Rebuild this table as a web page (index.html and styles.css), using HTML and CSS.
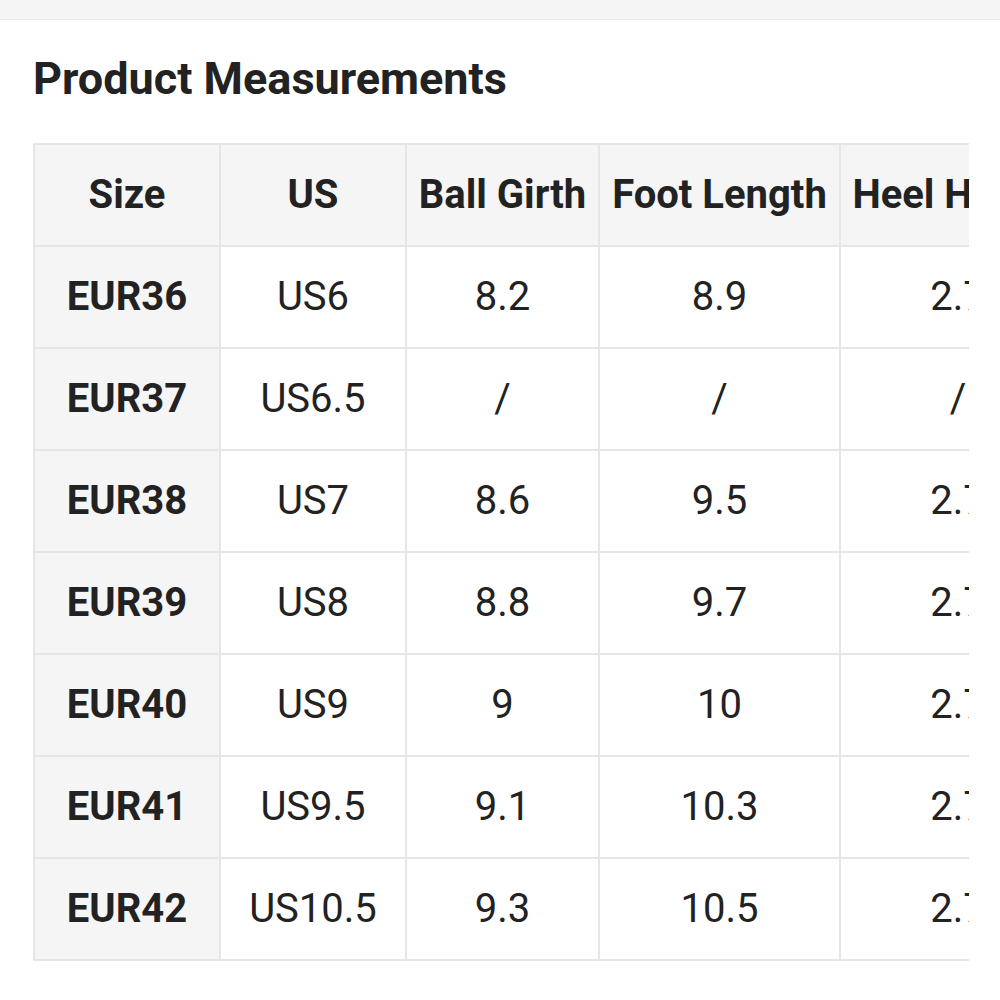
FILE: index.html
```html
<!DOCTYPE html>
<html>
<head>
<meta charset="utf-8">
<link rel="stylesheet" href="styles.css">
</head>
<body>
<div class="topbar"></div>
<section class="measure">
  <h2 class="title">Product Measurements</h2>
  <div class="table-wrap">
    <table class="sizes">
      <colgroup>
        <col class="c-size"><col class="c-us"><col class="c-ball"><col class="c-foot"><col class="c-heel">
      </colgroup>
      <thead>
        <tr><th>Size</th><th>US</th><th>Ball Girth</th><th>Foot Length</th><th>Heel Height</th></tr>
      </thead>
      <tbody>
        <tr><th>EUR36</th><td>US6</td><td>8.2</td><td>8.9</td><td>2.7</td></tr>
        <tr><th>EUR37</th><td>US6.5</td><td>/</td><td>/</td><td>/</td></tr>
        <tr><th>EUR38</th><td>US7</td><td>8.6</td><td>9.5</td><td>2.7</td></tr>
        <tr><th>EUR39</th><td>US8</td><td>8.8</td><td>9.7</td><td>2.7</td></tr>
        <tr><th>EUR40</th><td>US9</td><td>9</td><td>10</td><td>2.7</td></tr>
        <tr><th>EUR41</th><td>US9.5</td><td>9.1</td><td>10.3</td><td>2.7</td></tr>
        <tr><th>EUR42</th><td>US10.5</td><td>9.3</td><td>10.5</td><td>2.7</td></tr>
      </tbody>
    </table>
  </div>
</section>
</body>
</html>
```
FILE: styles.css
```css
html, body {
  margin: 0;
  padding: 0;
  background: #ffffff;
  font-family: Roboto, "Liberation Sans", sans-serif;
  color: #222222;
}
.topbar {
  height: 19px;
  background: #f5f5f5;
  border-bottom: 1px solid #ececec;
}
.measure {
  padding: 0 31px 0 33px;
}
.title {
  margin: 32px 0 37px 0;
  font-size: 45px;
  line-height: 54px;
  font-weight: 700;
  color: #222222;
}
.table-wrap {
  overflow: hidden;
  width: 936px;
}
.sizes {
  border-collapse: collapse;
  table-layout: fixed;
  width: 1042px;
  font-size: 40px;
}
.c-size { width: 186px; }
.c-us { width: 186px; }
.c-ball { width: 193px; }
.c-foot { width: 241px; }
.c-heel { width: 236px; }
.sizes th, .sizes td {
  height: 100px;
  padding: 0;
  border: 2px solid #e6e6e6;
  text-align: center;
  vertical-align: middle;
  white-space: nowrap;
  overflow: hidden;
  line-height: 1;
}
.sizes thead th {
  background: #f5f5f5;
  font-weight: 700;
}
.sizes tbody th {
  background: #f5f5f5;
  font-weight: 700;
}
.sizes td {
  font-weight: 400;
  background: #ffffff;
}
```
